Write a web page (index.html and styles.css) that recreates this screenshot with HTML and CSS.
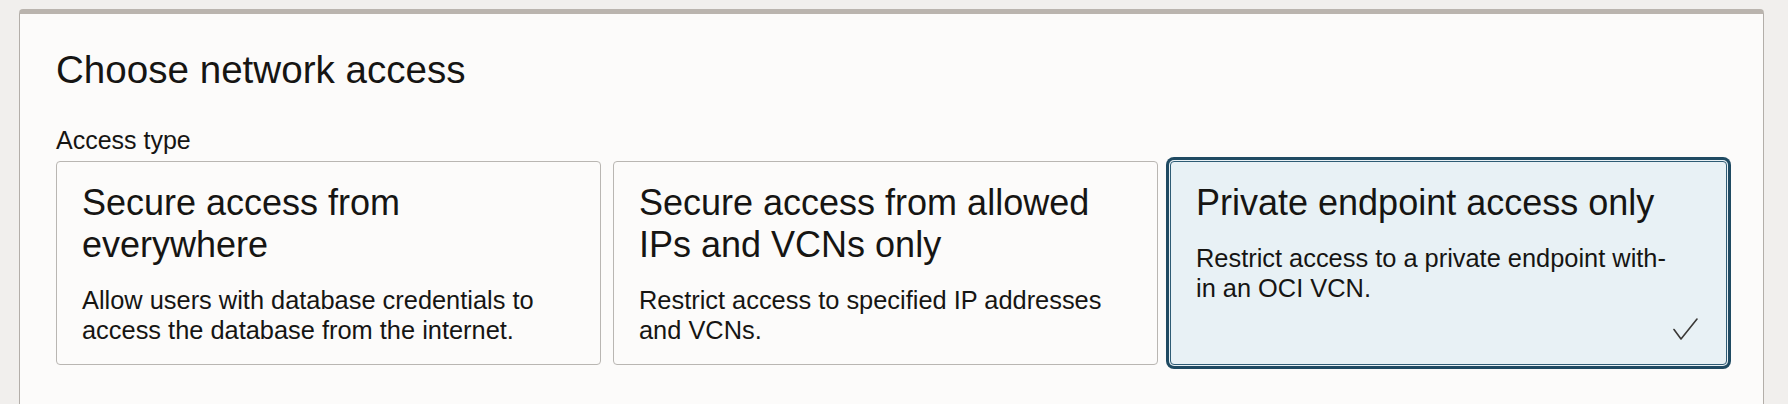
FILE: index.html
```html
<!DOCTYPE html>
<html lang="en">
<head>
<meta charset="utf-8">
<title>Choose network access</title>
<link rel="stylesheet" href="styles.css">
</head>
<body>
<section class="panel">
  <h2 class="panel-title">Choose network access</h2>
  <div class="field-label">Access type</div>
  <div class="cards" role="radiogroup">
    <div class="card" role="radio" aria-checked="false">
      <div class="card-title">Secure access from everywhere</div>
      <div class="card-desc">Allow users with database credentials to access the database from the internet.</div>
    </div>
    <div class="card" role="radio" aria-checked="false">
      <div class="card-title">Secure access from allowed IPs and VCNs only</div>
      <div class="card-desc">Restrict access to specified IP addresses and VCNs.</div>
    </div>
    <div class="card card-selected" role="radio" aria-checked="true">
      <div class="card-title">Private endpoint access only</div>
      <div class="card-desc">Restrict access to a private endpoint with-<br>in an OCI VCN.</div>
      <svg class="card-check" width="25" height="22" viewBox="0 0 25 22" aria-hidden="true">
        <path d="M1 11.5 L8 21 L24 1" fill="none" stroke="#3a3836" stroke-width="1.6" stroke-linecap="round" stroke-linejoin="round"/>
      </svg>
    </div>
  </div>
</section>
</body>
</html>
```
FILE: styles.css
```css
html, body {
  margin: 0;
  background: #f1efed;
}

body {
  padding: 9px 24px 0 19px;
  font-family: "Liberation Sans", Arial, Helvetica, sans-serif;
  color: #161513;
  height: 404px;
  box-sizing: border-box;
  overflow: hidden;
}

.panel {
  background: #fcfbfa;
  border-top: 5px solid #bab4ae;
  border-left: 1px solid #b3aea9;
  border-right: 1px solid #b3aea9;
  border-radius: 4px 4px 0 0;
  padding: 33px 36px 0 36px;
  height: 395px;
  box-sizing: border-box;
}

.panel-title {
  margin: 0;
  font-size: 38.6px;
  line-height: 46px;
  font-weight: 400;
  color: #161513;
}

.field-label {
  margin-top: 32px;
  font-size: 25px;
  line-height: 30px;
  color: #161513;
}

.cards {
  margin-top: 6px;
  display: grid;
  grid-template-columns: 545fr 545fr 557fr;
  gap: 12px;
}

.card {
  display: flex;
  flex-direction: column;
  background: #fcfbfa;
  border: 1px solid #b9b6b2;
  border-radius: 4px;
  padding: 20px 25px 15px 25px;
  min-height: 204px;
  box-sizing: border-box;
}

.card-title {
  font-size: 36px;
  line-height: 42px;
  color: #161513;
}

.card-desc {
  margin-top: 19px;
  font-size: 25.4px;
  line-height: 30px;
  color: #161513;
}

.card-selected {
  background: #e8f1f5;
  border-color: #2e5b74;
  box-shadow: 0 0 0 1px #e8f1f5, 0 0 0 4px #1f4a62;
}

.card-check {
  display: block;
  margin-top: auto;
  align-self: flex-end;
  margin-right: 3px;
  margin-bottom: 9px;
}
```
